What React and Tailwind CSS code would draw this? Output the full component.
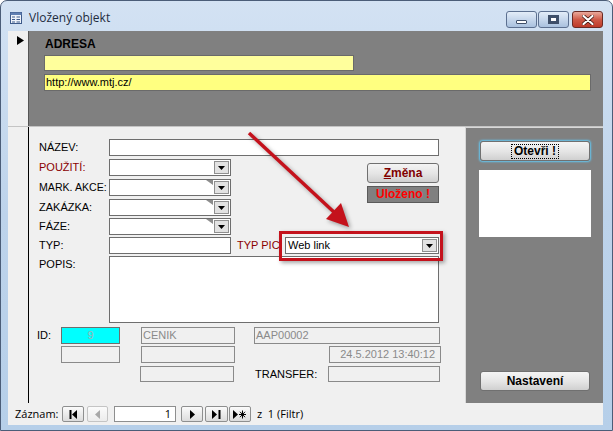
import React from "react";

function DropArrow() {
  return (
    <svg width="7" height="4" viewBox="0 0 7 4">
      <polygon points="0,0 7,0 3.5,4" fill="#000" />
    </svg>
  );
}

function Combo({ className = "", notch = false, children }) {
  return (
    <div className={`relative flex h-[17px] shrink-0 border border-[#6e6e6e] bg-white ${className}`}>
      <div className="flex-1 pl-[2px] text-[11px] leading-[15px] text-black">{children}</div>
      {notch && (
        <svg className="absolute right-[17px] top-0" width="7" height="5" viewBox="0 0 7 5">
          <polygon points="0,0 7,0 7,5" fill="#8c8c8c" />
        </svg>
      )}
      <div className="m-[1px] flex w-[15px] items-center justify-center border border-[#8f8f8f] bg-[#e2e2e2]">
        <DropArrow />
      </div>
    </div>
  );
}

function WinButton({ children, className = "" }) {
  return (
    <div className={`flex h-[20px] items-center justify-center rounded-[3px] border border-[#707070] bg-gradient-to-b from-[#f4f4f4] via-[#e6e6e6] to-[#d0d0d0] text-[12px] font-bold ${className}`}>
      {children}
    </div>
  );
}

function NavBtn({ children, className = "" }) {
  return (
    <div className={`flex h-[16px] items-center justify-center rounded-[2px] border border-[#8e8f8f] bg-gradient-to-b from-[#fbfbfb] to-[#dcdcdc] ${className}`}>
      {children}
    </div>
  );
}

export default function App() {
  return (
    <div className="relative h-[431px] w-[613px] overflow-hidden bg-white font-['Liberation_Sans',Arial,sans-serif] text-black">
      <div className="flex h-[431px] w-[613px] flex-col rounded-t-[7px] border border-[#4b5d78] bg-gradient-to-b from-[#d3e2f3] via-[#bdd3eb] to-[#b6cfe9]">
        {/* title bar */}
        <div className="flex h-[30px] shrink-0 items-start">
          <svg className="ml-[9px] mt-[11px]" width="12" height="12" viewBox="0 0 12 12">
            <rect x="0.5" y="0.5" width="11" height="11" fill="#eef3fa" stroke="#3d5a8a" />
            <rect x="0.5" y="0.5" width="11" height="2.5" fill="#5f7fb2" />
            <line x1="2" y1="5" x2="5" y2="5" stroke="#3d5a8a" />
            <line x1="2" y1="7.5" x2="5" y2="7.5" stroke="#3d5a8a" />
            <line x1="2" y1="10" x2="5" y2="10" stroke="#3d5a8a" />
            <line x1="6.5" y1="5" x2="10" y2="5" stroke="#3d5a8a" />
            <line x1="6.5" y1="7.5" x2="10" y2="7.5" stroke="#3d5a8a" />
            <line x1="6.5" y1="10" x2="10" y2="10" stroke="#3d5a8a" />
          </svg>
          <div className="ml-[7px] mt-[9px] font-['Open_Sans',sans-serif] text-[12px] leading-[16px] text-[#1e2c3e]">Vložený objekt</div>
          <div className="ml-auto mr-[9px] mt-[10px] flex gap-[1px]">
            <div className="flex h-[17px] w-[31px] items-end justify-center rounded-[3px] border border-[#5c7090] bg-gradient-to-b from-[#e3edf8] via-[#c6d7ec] to-[#a9c1de] pb-[3px]">
              <div className="h-[4px] w-[11px] rounded-[1px] border border-[#3e4f69] bg-white" />
            </div>
            <div className="flex h-[17px] w-[31px] items-center justify-center rounded-[3px] border border-[#5c7090] bg-gradient-to-b from-[#e3edf8] via-[#c6d7ec] to-[#a9c1de]">
              <div className="h-[9px] w-[11px] border border-[#3e4f69] bg-[#3e4f69] p-[2px]">
                <div className="h-full w-full bg-white" />
              </div>
            </div>
            <div className="ml-[2px] flex h-[17px] w-[31px] items-center justify-center rounded-[3px] border border-[#6b2a24] bg-gradient-to-b from-[#e9a99c] via-[#cf5a48] to-[#bd3a2a]">
              <svg width="12" height="10" viewBox="0 0 12 10">
                <path d="M1.5 1 L10.5 9 M10.5 1 L1.5 9" stroke="#3c1510" strokeWidth="3.6" strokeLinecap="round" />
                <path d="M1.5 1 L10.5 9 M10.5 1 L1.5 9" stroke="#ffffff" strokeWidth="2.2" strokeLinecap="round" />
              </svg>
            </div>
          </div>
        </div>

        {/* client area */}
        <div className="ml-[7px] flex h-[394px] w-[595px] flex-col bg-[#f0f0f0]">
          {/* header section */}
          <div className="flex h-[95px] shrink-0">
            <div className="w-[21px] shrink-0 border-r border-[#555] bg-[#f0f0f0] pl-[9px] pt-[5px]">
              <svg width="7" height="9" viewBox="0 0 7 9">
                <polygon points="0,0 7,4.5 0,9" fill="#000" />
              </svg>
            </div>
            <div className="flex flex-1 flex-col bg-[#808080] pl-[15px]">
              <div className="ml-[1px] mt-[6px] text-[12px] font-bold leading-[14px]">ADRESA</div>
              <div className="mt-[4px] h-[16px] w-[310px] border border-[#6a6a6a] bg-[#ffff9c]" />
              <div className="mt-[3px] h-[17px] w-[547px] border border-[#6a6a6a] bg-[#ffff80] pl-[1px] text-[11px] leading-[15px]">
                http://www.mtj.cz/
              </div>
            </div>
          </div>
          <div className="h-[1px] shrink-0 bg-[#c4c4c4]" />

          {/* body */}
          <div className="flex h-[276px] shrink-0">
            <div className="w-[21px] shrink-0 border-r border-black bg-[#f0f0f0]" />
            {/* form */}
            <div className="flex w-[436px] shrink-0 flex-col whitespace-nowrap pl-[10px] text-[11px] leading-[17px]">
              <div className="mt-[12px] flex h-[17px]">
                <div className="w-[70px] shrink-0">NÁZEV:</div>
                <div className="h-[17px] w-[330px] border border-[#6e6e6e] bg-white" />
              </div>
              <div className="flex">
                <div className="flex w-[192px] flex-col">
                  <div className="mt-[3px] flex h-[17px]">
                    <div className="w-[70px] shrink-0 text-[#8b0000]">POUŽITÍ:</div>
                    <Combo className="w-[122px]" />
                  </div>
                  <div className="mt-[3px] flex h-[17px]">
                    <div className="w-[70px] shrink-0 text-[10.6px]">MARK. AKCE:</div>
                    <Combo className="w-[122px]" notch />
                  </div>
                  <div className="mt-[3px] flex h-[17px]">
                    <div className="w-[70px] shrink-0">ZAKÁZKA:</div>
                    <Combo className="w-[122px]" notch />
                  </div>
                  <div className="mt-[2px] flex h-[17px]">
                    <div className="w-[70px] shrink-0">FÁZE:</div>
                    <Combo className="w-[122px]" notch />
                  </div>
                </div>
                <div className="ml-[136px] flex w-[72px] flex-col">
                  <WinButton className="mt-[7px] text-[#800000]">
                    <span className="underline">Z</span>měna
                  </WinButton>
                  <div className="mt-[3px] flex h-[17px] items-center justify-center border border-[#5a5a5a] bg-[#808080] text-[12px] font-bold text-[#ff0000]">
                    Uloženo !
                  </div>
                </div>
              </div>
              <div className="mt-[2px] flex h-[17px]">
                <div className="w-[70px] shrink-0">TYP:</div>
                <div className="h-[17px] w-[122px] shrink-0 border border-[#6e6e6e] bg-white" />
                <div className="ml-[6px] w-[48px] shrink-0 overflow-visible text-[#8b0000]">TYP PIC:</div>
                <Combo className="w-[154px]">Web link</Combo>
              </div>
              <div className="mt-[2px] flex">
                <div className="w-[70px] shrink-0">POPIS:</div>
                <div className="h-[67px] w-[330px] border border-[#6e6e6e] bg-white" />
              </div>
              <div className="-ml-[2px] mt-[4px] flex h-[17px] leading-[15px]">
                <div className="w-[24px] shrink-0 leading-[17px]">ID:</div>
                <div className="w-[59px] border border-[#6e6e6e] bg-[#00ffff] text-center text-[#9fb5b5]">9</div>
                <div className="ml-[21px] w-[94px] border border-[#8a8a8a] pl-[1px] text-[#8a8a8a]">CENIK</div>
                <div className="ml-[19px] w-[186px] border border-[#8a8a8a] pl-[1px] text-[#8a8a8a]">AAP00002</div>
              </div>
              <div className="-ml-[2px] mt-[2px] flex h-[17px] leading-[15px]">
                <div className="ml-[24px] w-[59px] border border-[#8a8a8a]" />
                <div className="ml-[21px] w-[94px] border border-[#8a8a8a]" />
                <div className="ml-[94px] w-[112px] border border-[#8a8a8a] pr-[5px] text-right text-[#8a8a8a]">24.5.2012 13:40:12</div>
              </div>
              <div className="-ml-[2px] mt-[3px] flex h-[16px] leading-[16px]">
                <div className="ml-[103px] w-[94px] border border-[#8a8a8a]" />
                <div className="ml-[21px] w-[73px]">TRANSFER:</div>
                <div className="w-[112px] border border-[#8a8a8a]" />
              </div>
            </div>
            {/* right panel */}
            <div className="flex w-[138px] shrink-0 flex-col border-l border-t border-[#d8d8d8] bg-[#808080]">
              <div className="ml-[14px] mt-[13px] w-[110px] rounded-[3px] shadow-[0_0_2px_1px_#63c6f0]">
                <WinButton className="border-[#3c7fb1]">
                  <span className="border border-dotted border-black px-[2px] leading-[13px]">Otevři !</span>
                </WinButton>
              </div>
              <div className="ml-[13px] mt-[9px] h-[67px] w-[112px] bg-white" />
              <WinButton className="ml-[14px] mt-[134px] w-[110px]">Nastavení</WinButton>
            </div>
          </div>

          {/* navigation bar */}
          <div className="flex h-[22px] shrink-0 items-center pl-[7px] font-['Open_Sans',sans-serif] text-[11px]">
            <div className="w-[47px] leading-[16px]">Záznam:</div>
            <NavBtn className="w-[22px]">
              <svg width="9" height="9" viewBox="0 0 9 9">
                <rect x="0.5" y="0" width="2" height="9" fill="#000" />
                <polygon points="8,0 3,4.5 8,9" fill="#000" />
              </svg>
            </NavBtn>
            <NavBtn className="ml-[3px] w-[21px] border-[#c4c4c4] from-[#f6f6f6] to-[#ececec]">
              <svg width="5" height="9" viewBox="0 0 5 9">
                <polygon points="5,0 0,4.5 5,9" fill="#a8a8a8" />
              </svg>
            </NavBtn>
            <div className="ml-[6px] h-[16px] w-[62px] border border-[#8e8f8f] bg-white pr-[4px] text-right leading-[14px]">1</div>
            <NavBtn className="ml-[5px] w-[22px]">
              <svg width="5" height="9" viewBox="0 0 5 9">
                <polygon points="0,0 5,4.5 0,9" fill="#000" />
              </svg>
            </NavBtn>
            <NavBtn className="ml-[2px] w-[23px]">
              <svg width="9" height="9" viewBox="0 0 9 9">
                <polygon points="0,0 5,4.5 0,9" fill="#000" />
                <rect x="6.5" y="0" width="2" height="9" fill="#000" />
              </svg>
            </NavBtn>
            <NavBtn className="ml-[1px] w-[22px]">
              <svg width="14" height="9" viewBox="0 0 14 9">
                <polygon points="0,0 5,4.5 0,9" fill="#000" />
                <path d="M9.5 0.5 V8.5 M6 4.5 H13 M7 1.8 L12 7.2 M12 1.8 L7 7.2" stroke="#000" strokeWidth="1" />
              </svg>
            </NavBtn>
            <div className="ml-[6px] leading-[16px]">z&nbsp; 1 (Filtr)</div>
          </div>
        </div>
      </div>

      {/* annotation overlay */}
      <div className="pointer-events-none absolute left-[279px] top-[231px] h-[30px] w-[164px] border-[3px] border-[#c4121c] shadow-[2px_2px_4px_rgba(0,0,0,0.35)]" />
      <svg className="pointer-events-none absolute left-0 top-0 drop-shadow-[2px_2px_2px_rgba(0,0,0,0.35)]" width="613" height="431" viewBox="0 0 613 431">
        <line x1="249" y1="133" x2="336" y2="214" stroke="#c4121c" strokeWidth="3.5" />
        <polygon points="349,227 326,219 341,203" fill="#c4121c" />
      </svg>
    </div>
  );
}
